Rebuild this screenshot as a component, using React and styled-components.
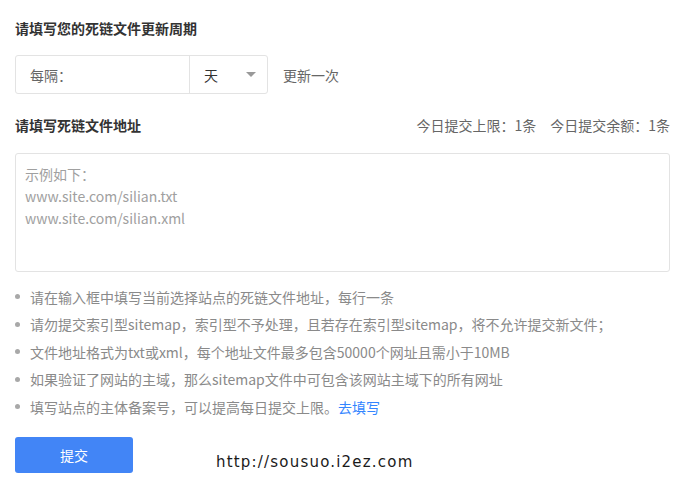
import React from "react";
import styled, { createGlobalStyle } from "styled-components";

const GlobalStyle = createGlobalStyle`
  html, body {
    margin: 0;
    padding: 0;
    background: #fff;
  }
  body {
    font-family: "Noto Sans CJK SC", "Microsoft YaHei", sans-serif;
    font-size: 14px;
    color: #666;
  }
`;

const Page = styled.div`
  position: relative;
  width: 688px;
  height: 496px;
  box-sizing: border-box;
  padding: 18px 18px 0 15px;
`;

const Title = styled.h3`
  margin: 0;
  font-size: 14px;
  line-height: 20px;
  font-weight: bold;
  color: #333;
`;

const CycleRow = styled.div`
  display: flex;
  align-items: center;
  margin-top: 17px;
`;

const SelectGroup = styled.div`
  display: flex;
  height: 39px;
  box-sizing: border-box;
  width: 253px;
  border: 1px solid #e3e3e3;
  border-radius: 3px;
`;

const Prefix = styled.div`
  display: flex;
  align-items: center;
  width: 174px;
  padding-left: 14px;
  box-sizing: border-box;
  border-right: 1px solid #e3e3e3;
  color: #666;
`;

const Unit = styled.div`
  flex: 1;
  display: flex;
  align-items: center;
  justify-content: space-between;
  padding: 0 11px 0 14px;
  color: #333;
`;

const Caret = styled.span`
  width: 0;
  height: 0;
  border-left: 5px solid transparent;
  border-right: 5px solid transparent;
  border-top: 5px solid #999;
`;

const Suffix = styled.span`
  margin-left: 15px;
  color: #666;
`;

const HeaderRow = styled.div`
  display: flex;
  justify-content: space-between;
  align-items: center;
  margin-top: 21px;
`;

const Quota = styled.div`
  display: flex;
  gap: 14px;
  line-height: 20px;
  color: #666;
`;

const Area = styled.textarea`
  display: block;
  width: 100%;
  height: 119px;
  margin-top: 18px;
  box-sizing: border-box;
  border: 1px solid #e3e3e3;
  border-radius: 3px;
  padding: 9px 9px;
  resize: none;
  outline: none;
  font-family: "Noto Sans CJK SC", "Microsoft YaHei", sans-serif;
  font-size: 14px;
  line-height: 22px;
  color: #333;

  &::placeholder {
    color: #a0a0a0;
  }
`;

const Tips = styled.ul`
  list-style: none;
  margin: 11px 0 0;
  padding: 0;
`;

const Tip = styled.li`
  display: flex;
  align-items: center;
  height: 27.5px;
  color: #8a8a8a;

  &::before {
    content: "";
    width: 5px;
    height: 5px;
    border-radius: 50%;
    background: #a8a8a8;
    margin: 0 10px 0 0;
  }
`;

const Link = styled.a`
  color: #3385ff;
  text-decoration: none;
`;

const Submit = styled.button`
  display: block;
  margin-top: 16px;
  width: 118px;
  height: 36px;
  border: none;
  border-radius: 3px;
  background: #4285f6;
  color: #fff;
  font-family: "Noto Sans CJK SC", "Microsoft YaHei", sans-serif;
  font-size: 14px;
  cursor: pointer;
`;

const Watermark = styled.div`
  position: absolute;
  left: 216px;
  top: 453px;
  font-family: "DejaVu Sans", Verdana, sans-serif;
  font-size: 15px;
  letter-spacing: 1.2px;
  color: #1a1a1a;
`;

const tips = [
  "请在输入框中填写当前选择站点的死链文件地址，每行一条",
  "请勿提交索引型sitemap，索引型不予处理，且若存在索引型sitemap，将不允许提交新文件；",
  "文件地址格式为txt或xml，每个地址文件最多包含50000个网址且需小于10MB",
  "如果验证了网站的主域，那么sitemap文件中可包含该网站主域下的所有网址",
];

export default function App() {
  return (
    <Page>
      <GlobalStyle />
      <Title>请填写您的死链文件更新周期</Title>
      <CycleRow>
        <SelectGroup>
          <Prefix>每隔：</Prefix>
          <Unit>
            天
            <Caret />
          </Unit>
        </SelectGroup>
        <Suffix>更新一次</Suffix>
      </CycleRow>

      <HeaderRow>
        <Title>请填写死链文件地址</Title>
        <Quota>
          <span>今日提交上限：1条</span>
          <span>今日提交余额：1条</span>
        </Quota>
      </HeaderRow>

      <Area
        placeholder={"示例如下：\nwww.site.com/silian.txt\nwww.site.com/silian.xml"}
      />

      <Tips>
        {tips.map((t) => (
          <Tip key={t}>{t}</Tip>
        ))}
        <Tip>
          填写站点的主体备案号，可以提高每日提交上限。
          <Link href="#">去填写</Link>
        </Tip>
      </Tips>

      <Submit>提交</Submit>

      <Watermark>http://sousuo.i2ez.com</Watermark>
    </Page>
  );
}
